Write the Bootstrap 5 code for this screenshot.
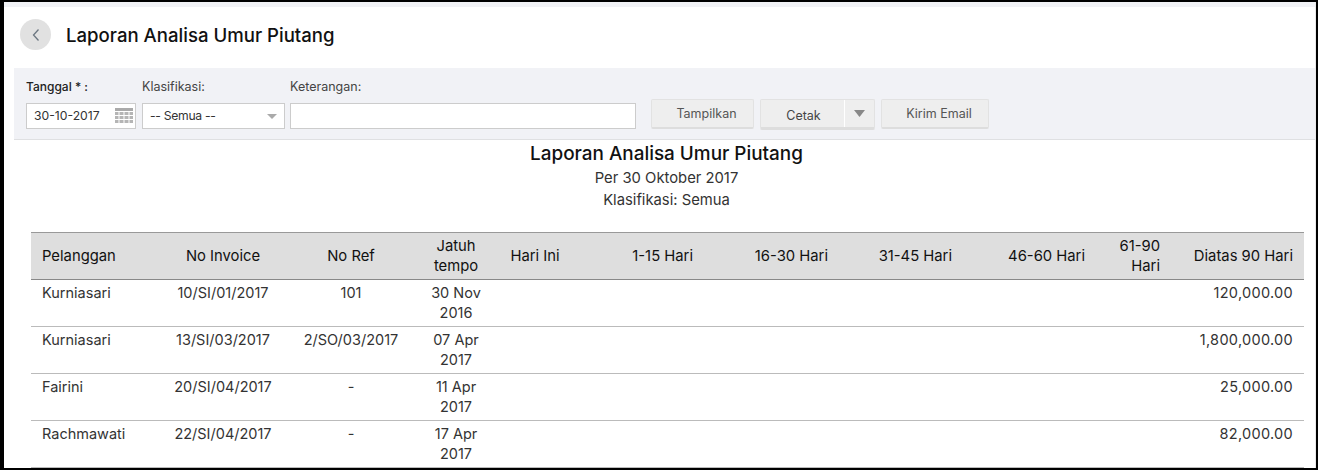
<!DOCTYPE html>
<html lang="id"><head><meta charset="utf-8"><title>Laporan Analisa Umur Piutang</title>
<link rel="stylesheet" href="https://cdn.jsdelivr.net/npm/bootstrap@5.3.0/dist/css/bootstrap.min.css">
<style>
html,body{height:100%;overflow:hidden}
body{background:#000;font-family:"Inter","Liberation Sans",sans-serif;color:#333;font-size:14.500px;padding:2px 2px 2px 4px}
.sheet{background:#fff;height:466px;overflow:hidden;border-right:1px solid #e9e9e9}
.topstrip{height:5px;background:#f1f2f6}
.topbar{height:61px;padding:13px 0 0 16px;gap:15px}
.backbtn{width:31px;height:31px;border-radius:50%;background:#e1e1e1;border:0;padding:0;margin-top:-1px}
.pagetitle{font-size:18.600px;font-weight:500;color:#111;margin:0;line-height:31px}
.filters{margin-left:10px;height:72px;background:#f1f2f6;border-bottom:1px solid #dfe0e2;padding:10px 0 0 12px}
.fld label{display:block;font-size:12.500px;line-height:18px;color:#444;margin-bottom:7px}
.fld label.req{color:#222;font-weight:500;font-size:12px}
.inbox{height:26px;background:#fff;border:1px solid #ccc;font-size:12.200px;line-height:24px;padding:0 2px 0 7px;color:#333}
.w-date{width:110px}.w-sel{width:143px;padding-right:7px}.w-sel span{letter-spacing:-.3px}.w-note{width:346px}
.flt-gap{gap:6px}
.note-fld{margin-left:-1px}
.fbtn{height:30px;background:#eee;border:1px solid #e2e2e2;border-bottom:2px solid #ddd;border-radius:2px;font-size:12.500px;color:#555;padding:0 0 0 8px;line-height:24px;margin-top:21px}
.w-show{width:103px;margin-left:9px}.w-mail{width:108px}
.splitb{margin-top:21px;height:31px;width:115px;background:#eee;border-radius:2px;border:1px solid #e2e2e2;border-bottom:3px solid #ddd;color:#444;font-size:12.500px}
.splitb span{line-height:31px;width:84px;padding-left:2px;text-align:center;border-right:1px solid #fff}
.caretb{flex:1}
.rpt-h{text-align:center;margin-left:10px;padding:2px 0 0 4px}
.rpt-h h2{font-size:18.900px;line-height:24px;font-weight:500;color:#111;margin:0}
.rpt-h p{margin:0;line-height:22px;font-size:14.800px;color:#333}
.rpt-h h2+p{margin-top:1px}
.agetable{margin:21px 0 0 27px;width:1273px;table-layout:fixed;border-collapse:collapse;color:#333}
.agetable th{background:#dedede;font-weight:400;font-size:14.800px;color:#111;padding:3px 11px;line-height:20px;border-top:1px solid #999;border-bottom:1px solid #888;vertical-align:middle}
.agetable td{padding:3px 11px;line-height:20px;border-bottom:1px solid #bbb;vertical-align:top}
.agetable .hari-ini{padding-left:0;padding-right:0;white-space:nowrap}
.agetable .amt{letter-spacing:.3px}
</style></head><body>
<div class="sheet">
<div class="topstrip"></div>
<div class="topbar d-flex align-items-start">
<button class="backbtn d-flex align-items-center justify-content-center" aria-label="Kembali"><svg width="10" height="14" viewBox="0 0 10 14"><path d="M7.500 1.500 2.500 7l5 5.500" fill="none" stroke="#6b7680" stroke-width="1.300"/></svg></button>
<h1 class="pagetitle">Laporan Analisa Umur Piutang</h1>
</div>
<div class="filters d-flex align-items-start flt-gap">
<div class="fld"><label class="req">Tanggal * :</label><div class="inbox w-date d-flex justify-content-between align-items-center"><span>30-10-2017</span><svg width="18" height="16" viewBox="0 0 18 16"><rect width="18" height="3" fill="#aaa"/><g fill="#b5b5b5"><rect y="4" width="3.500" height="3"/><rect x="4.500" y="4" width="4" height="3"/><rect x="9.500" y="4" width="4" height="3"/><rect x="14.500" y="4" width="3.500" height="3"/><rect y="8" width="3.500" height="3"/><rect x="4.500" y="8" width="4" height="3"/><rect x="9.500" y="8" width="4" height="3"/><rect x="14.500" y="8" width="3.500" height="3"/><rect y="12" width="3.500" height="3"/><rect x="4.500" y="12" width="4" height="3"/><rect x="9.500" y="12" width="4" height="3"/><rect x="14.500" y="12" width="3.500" height="3"/></g></svg></div></div>
<div class="fld"><label>Klasifikasi:</label><div class="inbox w-sel d-flex justify-content-between align-items-center"><span>-- Semua --</span><svg width="10" height="5" viewBox="0 0 10 5"><path d="M0 0h10L5 5z" fill="#aaa"/></svg></div></div>
<div class="fld note-fld"><label>Keterangan:</label><div class="inbox w-note"></div></div>
<button class="fbtn w-show">Tampilkan</button>
<div class="splitb d-flex"><span>Cetak</span><div class="caretb d-flex align-items-center justify-content-center"><svg width="11" height="7" viewBox="0 0 11 7"><path d="M0 0h11L5.500 7z" fill="#888"/></svg></div></div>
<button class="fbtn w-mail">Kirim Email</button>
</div>
<div class="rpt-h"><h2>Laporan Analisa Umur Piutang</h2><p>Per 30 Oktober 2017</p><p>Klasifikasi: Semua</p></div>
<table class="agetable">
<colgroup><col style="width:124px"><col style="width:136px"><col style="width:120px"><col style="width:90px"><col style="width:68px"><col style="width:135px"><col style="width:135px"><col style="width:124px"><col style="width:133px"><col style="width:75px"><col style="width:133px"></colgroup>
<thead><tr><th>Pelanggan</th><th class="text-center">No Invoice</th><th class="text-center">No Ref</th><th class="text-center">Jatuh tempo</th><th class="text-center hari-ini">Hari Ini</th><th class="text-end">1-15 Hari</th><th class="text-end">16-30 Hari</th><th class="text-end">31-45 Hari</th><th class="text-end">46-60 Hari</th><th class="text-end">61-90 Hari</th><th class="text-end">Diatas 90 Hari</th></tr></thead>
<tbody>
<tr><td>Kurniasari</td><td class="text-center">10/SI/01/2017</td><td class="text-center">101</td><td class="text-center">30 Nov 2016</td><td></td><td></td><td></td><td></td><td></td><td></td><td class="text-end amt">120,000.00</td></tr>
<tr><td>Kurniasari</td><td class="text-center">13/SI/03/2017</td><td class="text-center">2/SO/03/2017</td><td class="text-center">07 Apr 2017</td><td></td><td></td><td></td><td></td><td></td><td></td><td class="text-end amt">1,800,000.00</td></tr>
<tr><td>Fairini</td><td class="text-center">20/SI/04/2017</td><td class="text-center">-</td><td class="text-center">11 Apr 2017</td><td></td><td></td><td></td><td></td><td></td><td></td><td class="text-end amt">25,000.00</td></tr>
<tr><td>Rachmawati</td><td class="text-center">22/SI/04/2017</td><td class="text-center">-</td><td class="text-center">17 Apr 2017</td><td></td><td></td><td></td><td></td><td></td><td></td><td class="text-end amt">82,000.00</td></tr>
</tbody></table>
</div>
</body></html>
